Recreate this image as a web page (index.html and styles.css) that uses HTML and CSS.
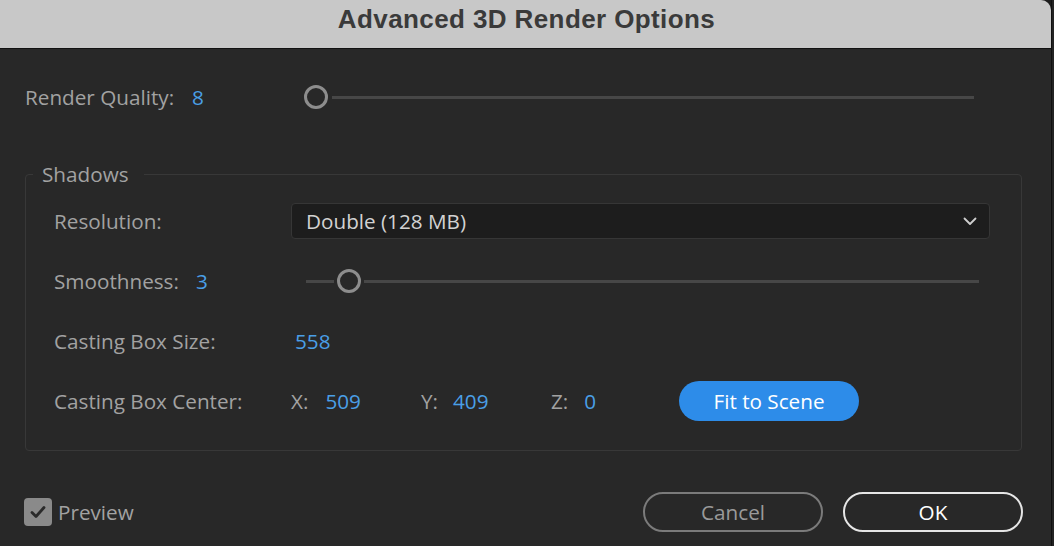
FILE: index.html
```html
<!DOCTYPE html>
<html>
<head>
<meta charset="utf-8">
<title>Advanced 3D Render Options</title>
<link rel="stylesheet" href="styles.css">
</head>
<body>
<div class="screen">
  <div class="dialog">
    <div class="titlebar">Advanced 3D Render Options</div>
    <div class="content">
      <div class="row rq-row">
        <div class="rq-label"><span class="label">Render Quality:</span><span class="value">8</span></div>
        <div class="slider rq-slider">
          <span class="thumb"></span>
          <span class="track"></span>
        </div>
      </div>

      <fieldset class="group">
        <legend class="legend">Shadows</legend>
        <div class="group-body">
          <div class="grow">
            <div class="gl"><span class="label">Resolution:</span></div>
            <div class="select">
              <span class="select-text">Double (128 MB)</span>
              <svg class="chev" width="14" height="9" viewBox="0 0 14 9"><path d="M1.5 1.5 L7 7 L12.5 1.5" fill="none" stroke="#cfcfcf" stroke-width="1.8" stroke-linecap="round" stroke-linejoin="round"/></svg>
            </div>
          </div>
          <div class="grow">
            <div class="gl"><span class="label">Smoothness:</span><span class="value">3</span></div>
            <div class="slider sm-slider">
              <span class="track left"></span>
              <span class="thumb"></span>
              <span class="track"></span>
            </div>
          </div>
          <div class="grow">
            <div class="gl"><span class="label">Casting Box Size:</span></div>
            <div class="plain"><span class="value v-size">558</span></div>
          </div>
          <div class="grow">
            <div class="gl"><span class="label">Casting Box Center:</span></div>
            <div class="coords">
              <div class="coord"><span class="label">X:</span><span class="value">509</span></div>
              <div class="coord"><span class="label">Y:</span><span class="value">409</span></div>
              <div class="coord"><span class="label">Z:</span><span class="value">0</span></div>
              <button class="btn-fit">Fit to Scene</button>
            </div>
          </div>
        </div>
      </fieldset>

      <div class="footer">
        <label class="check">
          <span class="box"><svg width="20" height="20" viewBox="0 0 20 20"><path d="M4 10.5 L8 14.5 L16 5.5" fill="none" stroke="#2a2a2a" stroke-width="2.8" stroke-linecap="round" stroke-linejoin="round"/></svg></span>
          <span class="label">Preview</span>
        </label>
        <div class="buttons">
          <button class="btn btn-cancel">Cancel</button>
          <button class="btn btn-ok">OK</button>
        </div>
      </div>
    </div>
  </div>
  <div class="edge"></div>
</div>
</body>
</html>
```

FILE: styles.css
```css
* { box-sizing: border-box; }
html, body {
  margin: 0;
  padding: 0;
  width: 1054px;
  height: 546px;
  overflow: hidden;
  background: #1c1c1c;
  font-family: "Open Sans", "Lato", sans-serif;
}
.screen {
  display: flex;
  width: 1054px;
  height: 546px;
}
.dialog {
  width: 1051px;
  height: 546px;
  background: #282828;
  border-top-right-radius: 10px;
  overflow: hidden;
  display: flex;
  flex-direction: column;
}
.edge {
  flex: 1;
  background: #232323;
  border-left: 1px solid #101010;
}
.titlebar {
  height: 49px;
  background: #c8c8c8;
  border-bottom: 1px solid #121212;
  color: #3a3a3a;
  font-family: "Liberation Sans", Arial, sans-serif;
  font-weight: bold;
  font-size: 26px;
  display: flex;
  align-items: center;
  justify-content: center;
  padding-bottom: 10px;
  padding-left: 2px;
  letter-spacing: 0.4px;
}
.content {
  padding: 0 29px 0 25px;
  display: flex;
  flex-direction: column;
}
.label {
  color: #a2a2a2;
  font-size: 20.7px;
}
.value {
  color: #4a9fe6;
  font-size: 20.7px;
}
.row {
  display: flex;
  align-items: center;
}
.rq-row {
  height: 40px;
  margin-top: 28px;
}
.rq-label {
  width: 280px;
  display: flex;
  align-items: center;
  gap: 18px;
}
.slider {
  display: flex;
  align-items: center;
  height: 26px;
}
.rq-slider {
  width: 670px;
  margin-left: -1px;
}
.thumb {
  width: 24px;
  height: 24px;
  border-radius: 50%;
  border: 3.5px solid #8d8d8d;
  background: #282828;
  flex: none;
}
.track {
  height: 3px;
  background: #474747;
  flex: 1;
  margin-left: 4px;
}
.track.left {
  flex: none;
  width: 28px;
  margin-left: 0;
  margin-right: 3px;
}
.group {
  margin: 44px 0 0 0;
  padding: 0;
  border: 1.5px solid #383838;
  border-radius: 4px;
  min-width: 0;
  height: 290px;
}
.legend {
  margin-left: 7px;
  padding: 0 15px 0 9px;
  color: #a2a2a2;
  font-size: 20.7px;
  line-height: 26px;
}
.group-body {
  padding: 4px 0 0 28px;
  display: flex;
  flex-direction: column;
}
.grow {
  height: 60px;
  display: flex;
  align-items: center;
}
.gl {
  width: 237px;
  display: flex;
  align-items: center;
  gap: 17px;
}
.select {
  width: 699px;
  height: 36px;
  background: #1d1d1d;
  border: 1.5px solid #363636;
  border-radius: 4px;
  display: flex;
  align-items: center;
  justify-content: space-between;
  padding: 0 12px 0 14px;
}
.select-text {
  color: #d2d2d2;
  font-size: 20.7px;
}
.chev { flex: none; margin-top: 1px; }
.sm-slider {
  margin-left: 12px;
  width: 676px;
}
.sm-slider .track { margin-left: 3px; }
.plain { padding-left: 4px; }
.coords {
  display: flex;
  align-items: center;
}
.coord {
  width: 130px;
  display: flex;
  align-items: center;
  gap: 17px;
}
.coord:nth-child(2) { gap: 15px; }
.coord:nth-child(3) { width: 129px; gap: 16px; }
.btn-fit {
  width: 180px;
  height: 40px;
  border: none;
  border-radius: 20px;
  background: #2d8ce9;
  color: #ffffff;
  font-family: "Open Sans", "Lato", sans-serif;
  font-size: 20.7px;
  padding: 0;
  margin-left: -1px;
}
.footer {
  margin-top: 41px;
  display: flex;
  align-items: center;
  justify-content: space-between;
  height: 40px;
}
.check {
  display: flex;
  align-items: center;
  gap: 6px;
  margin-left: -1px;
}
.box {
  width: 28px;
  height: 28px;
  border-radius: 4px;
  background: #8a8a8a;
  display: flex;
  align-items: center;
  justify-content: center;
}
.buttons {
  display: flex;
  gap: 20px;
  margin-right: -1px;
}
.btn {
  width: 180px;
  height: 40px;
  border-radius: 20px;
  background: transparent;
  font-family: "Open Sans", "Lato", sans-serif;
  font-size: 20.7px;
  padding: 0;
}
.btn-cancel {
  border: 2px solid #7b7b7b;
  color: #9a9a9a;
}
.btn-ok {
  border: 2px solid #e6e6e6;
  color: #ffffff;
}
```
